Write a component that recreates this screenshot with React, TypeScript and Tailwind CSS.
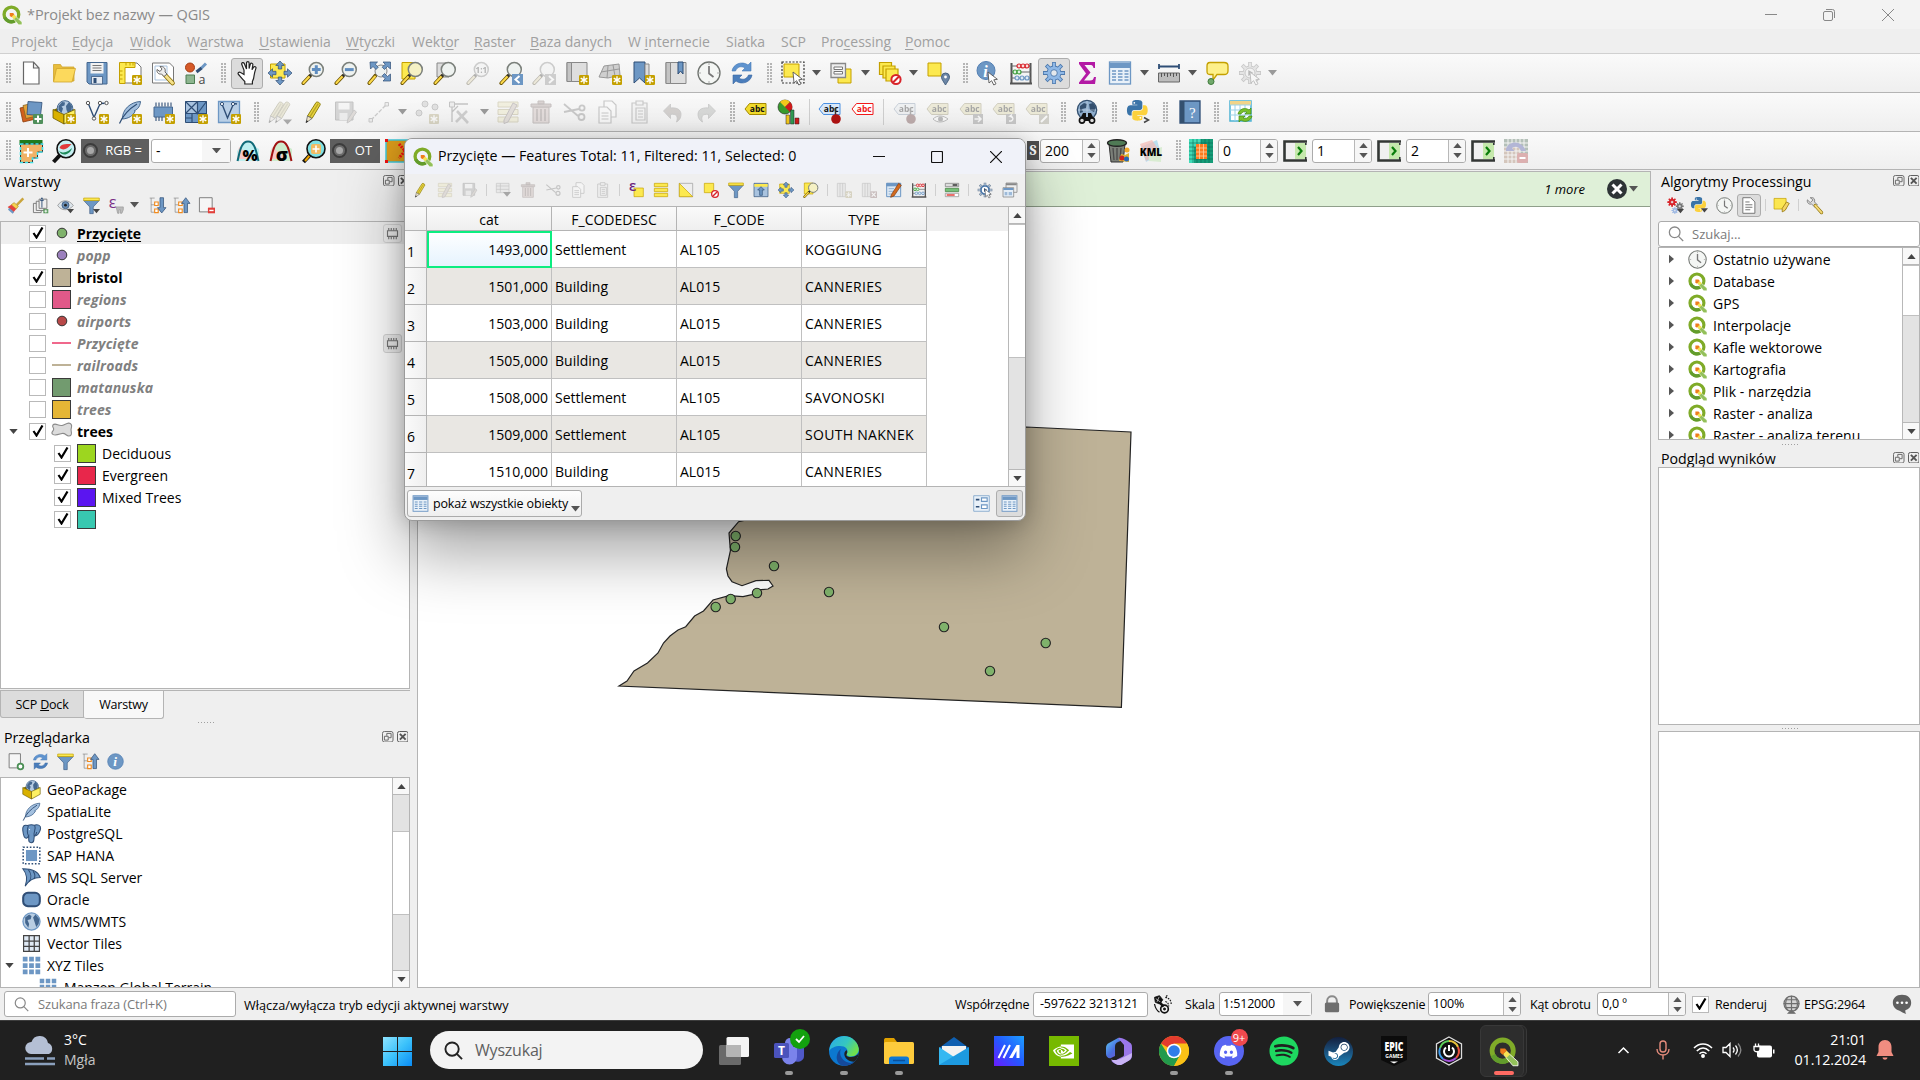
import React from "react";
import { FaDiscord, FaSpotify, FaSteamSymbol } from "react-icons/fa6";
import { SiNvidia } from "react-icons/si";

const B = "#6d97c4";
const D = "#2f4e76";
const Y = "#fce94f";
const G = "#c4a000";

/* ---------- shared icon parts ---------- */

const Star = () => (
  <g>
    <rect x="14" y="14" width="10" height="10" rx="1.2" fill={G} />
    <path d="M19 15.200v7.600M15.700 17.100l6.600 3.800M22.300 17.100l-6.600 3.800" stroke="#fff" strokeWidth="1.400" />
  </g>
);

const Glass = ({ fill = "#eef2f0" }: { fill?: string }) => (
  <g>
    <path d="M9 15L2.200 22.200" stroke="#6a5200" strokeWidth="3.600" strokeLinecap="round" />
    <path d="M8.200 15.800L2.400 22" stroke="#fcd94a" strokeWidth="2" strokeLinecap="round" />
    <path d="M10.600 13.200L8.600 15.400" stroke="#333" strokeWidth="2.600" />
    <circle cx="15.300" cy="8.600" r="7" fill={fill} stroke="#7b807b" strokeWidth="1.500" />
  </g>
);

const Pencil = () => (
  <g>
    <path d="M6.500 16L15 2.500c1.500-1.300 4.500.5 4.200 2.300L11 18.500z" fill="#e8d33f" stroke="#8f8010" />
    <path d="M8.700 17.200L17.200 3.600" stroke="#b8a524" strokeWidth="1.300" />
    <path d="M6.500 16L5 22.800l6-4.300z" fill="#efe3c4" stroke="#666" strokeWidth=".8" />
    <path d="M5.600 20.300L5 22.800l2.200-1.500z" fill="#111" />
  </g>
);

const Globe = () => (
  <g>
    <circle cx="13" cy="8.500" r="7.800" fill="#b5cbe2" stroke="#44678f" />
    <path d="M6.500 6l3.500-4 3 .5-.5 3-3 1 1.500 2-1.500 4.500-3-3zM14 6l3-4 3 4-.5 5-3 3-2-4z" fill="#44678f" />
  </g>
);

const BoxBack = () => <path d="M1 10l11-5 11 5-11 5z" fill="#7d6a00" />;
const Box3 = () => (
  <g>
    <path d="M1 9.500l11 5V24L1 18z" fill="#d9b100" stroke="#6b5a00" strokeWidth=".8" />
    <path d="M23 9.500l-11 5V24l11-6z" fill="#fdf062" stroke="#6b5a00" strokeWidth=".8" />
  </g>
);

const Tag = ({ f = "#f2dc2c", s = "#a58a00", t = "#111" }: { f?: string; s?: string; t?: string }) => (
  <g>
    <path d="M1 9l4.500-5.500H22v11H5.500z" fill={f} stroke={s} />
    <text x="13.200" y="12.200" fontSize="8.500" fontWeight="700" textAnchor="middle" fill={t} fontFamily="Open Sans, sans-serif">
      abc
    </text>
  </g>
);

const Abacus = () => (
  <g fill="none">
    <path d="M2.500 2v20M21.500 2v20M1 22.500h22" stroke="#555" strokeWidth="2" />
    <path d="M2 5h20M2 11h20M2 17h20" stroke="#666" />
    <g stroke="#d8232a" strokeWidth="1.200" fill="#fbdcdc">
      <circle cx="10" cy="5" r="2" />
      <circle cx="18" cy="5" r="2" />
      <circle cx="14" cy="5" r="2" />
    </g>
    <g stroke="#3fa03f" strokeWidth="1.200" fill="#def3de">
      <circle cx="6" cy="11" r="2" />
      <circle cx="10" cy="11" r="2" />
    </g>
    <g stroke={B} strokeWidth="1.200" fill="#dfeaf5">
      <circle cx="8" cy="17" r="2" />
      <circle cx="13" cy="17" r="2" />
      <circle cx="18" cy="17" r="2" />
    </g>
  </g>
);

const PY =
  "M14.25.18l.9.2.73.26.59.3.45.32.34.34.25.34.16.33.1.3.04.26.02.2-.01.13V8.5l-.05.63-.13.55-.21.46-.26.38-.3.31-.33.25-.35.19-.35.14-.33.1-.3.07-.26.04-.21.02H8.77l-.69.05-.59.14-.5.22-.41.27-.33.32-.27.35-.2.36-.15.37-.1.35-.07.32-.04.27-.02.21v3.06H3.17l-.21-.03-.28-.07-.32-.12-.35-.18-.36-.26-.36-.36-.35-.46-.32-.59-.28-.73-.21-.88-.14-1.05-.05-1.23.06-1.22.16-1.04.24-.87.32-.71.36-.57.4-.44.42-.33.42-.24.4-.16.36-.1.32-.05.24-.01h.16l.06.01h8.16v-.83H6.18l-.01-2.75-.02-.37.05-.34.11-.31.17-.28.25-.26.31-.23.38-.2.44-.18.51-.15.58-.12.64-.1.71-.06.77-.04.84-.02 1.27.05z";

const Python = () => (
  <g>
    <path d={PY} fill="#3a74a8" />
    <path d={PY} fill="#fcd13d" transform="rotate(180 12 12)" />
    <circle cx="8.500" cy="3.300" r="1" fill="#fff" />
    <circle cx="15.500" cy="20.700" r="1" fill="#fff" />
  </g>
);

const Cursor = () => <path d="M12 11l1 11 2.600-2.300 2.200 4.300 2.200-1.200-2.200-4 3.600-.5z" fill="#fff" stroke="#555" strokeWidth=".9" />;

const Clock = () => (
  <g>
    <circle cx="12" cy="12" r="11" fill="#f4f6f4" stroke="#6f736f" strokeWidth="1.300" />
    <path d="M12 5v7.500l4.500 3.500" stroke="#777" strokeWidth="1.700" fill="none" />
    <path d="M12 2v2M12 20v2M2 12h2M20 12h2" stroke="#aaa" />
  </g>
);

const Refresh = () => (
  <g>
    <path d="M2 10C3 3 12-.5 18 4l3-3v9h-9l3-3C11 4.500 7 6 5.500 10z" fill="#5e93cf" stroke="#4478b5" strokeWidth=".6" />
    <path d="M22 14c-1 7-10 10.500-16 6l-3 3v-9h9l-3 3c4 2.500 8 1 9.500-3z" fill="#4a7dbb" stroke="#3a68a3" strokeWidth=".6" />
  </g>
);

const Table = () => (
  <g>
    <rect x="1.500" y="1" width="21" height="22" fill="#e9f1f9" stroke={B} strokeWidth="1.300" />
    <path d="M2 2h20v5H2z" fill={B} />
    <path d="M4 10h4M4 13h4M4 16h4M4 19h4M10 10h4.500M10 13h4.500M10 16h4.500M10 19h4.500M16.500 10h4M16.500 13h4M16.500 16h4M16.500 19h4" stroke={B} strokeWidth="1.500" />
  </g>
);

const Funnel = () => (
  <g>
    <path d="M1 5h22l-8.500 9v9.500h-5V14z" fill={B} stroke={D} strokeWidth=".8" />
    <path d="M1 1.500h22V5H1z" fill={Y} stroke={G} />
  </g>
);

const Feather = () => (
  <g>
    <path d="M4.500 19C4 10 12 2 22.500 1.500 22 8 18 10 16 11c1 0 1 .5 1 .5-2 4-6 7-12.500 7.500z" fill="#a3c0df" stroke="#44678f" />
    <path d="M1.500 23.500C5 15 11 9 19 4" stroke={D} fill="none" strokeWidth="1.200" />
  </g>
);

const Arrows4 = () => (
  <g fill={B} stroke={D} strokeWidth=".7">
    <path d="M12 0l4.200 4.500h-2.500V8h-3.400V4.500H7.800zM12 24l4.200-4.500h-2.500V16h-3.400v3.500H7.800zM0 12l4.500-4.200v2.500H8v3.400H4.500v2.500zM24 12l-4.500-4.200v2.500H16v3.400h3.500v2.500z" />
  </g>
);

const Trash = () => (
  <g>
    <path d="M4 7h16v16H4z" fill="#e9a9a0" stroke="#8b5a52" />
    <path d="M2 4h20v3H2zM9 1h6v3H9z" fill="#c98a80" stroke="#8b5a52" />
    <path d="M8 9v12M12 9v12M16 9v12" stroke="#8b5a52" strokeWidth="1.500" />
  </g>
);

const Rows = () => (
  <g fill={Y} stroke={G}>
    <path d="M2 2h20v5H2zM2 9.500h20v5H2zM2 17h20v5H2z" />
  </g>
);

const Tree = () => (
  <g>
    <path d="M1 1.500h7M3 1.500v20h5M3 11h5" stroke="#888" fill="none" />
    <path d="M8 7h5v5H8zM8 17h5v5H8z" fill="#fff" stroke="#f08a1d" strokeWidth="1.600" />
  </g>
);

const Gear = ({ c = B, s = D }: { c?: string; s?: string }) => (
  <g>
    <path d="M12 1v22M1 12h22M4.200 4.200l15.600 15.600M19.800 4.200L4.200 19.800" stroke={s} strokeWidth="3.800" />
    <circle cx="12" cy="12" r="7.400" fill={s} />
    <path d="M12 1.800v20.400M1.800 12h20.400M4.800 4.800l14.400 14.400M19.200 4.800L4.800 19.200" stroke={c} strokeWidth="2.200" />
    <circle cx="12" cy="12" r="6.600" fill={c} />
    <circle cx="12" cy="12" r="3.300" fill="#e4e8ec" stroke={s} strokeWidth=".9" />
  </g>
);

const Q = () => (
  <g>
    <circle cx="11.300" cy="11.300" r="8.800" fill="none" stroke="#7fab28" strokeWidth="4" />
    <path d="M3.300 15A8.800 8.800 0 0015 19.300" fill="none" stroke="#629c2c" strokeWidth="4" />
    <path d="M14.800 12.200L24 20.500v3.300h-4.200l-7.200-8.600z" fill="#93c05a" stroke="#fff" strokeWidth=".7" />
    <path d="M11.500 14l2.800-2.800 3.200 3-3 3z" fill="#f6e354" />
    <path d="M9.300 9.600h4l1.500 1.500-3.600 3.600-1.900-1.900z" fill="#ee7d1b" />
  </g>
);

const Doc = () => <path d="M4 1h11l6 6v16H4z" fill="#fff" stroke="#666" strokeWidth="1.200" />;

const Grid9 = () => (
  <path d="M1 1h6v6H1zM9 1h6v6H9zM17 1h6v6h-6zM1 9h6v6H1zM9 9h6v6H9zM17 9h6v6h-6zM1 17h6v6H1zM9 17h6v6H9zM17 17h6v6h-6z" fill={B} />
);

const Hand = () => (
  <path
    d="M9 13.500V9L6.800 3.600c-.7-2 1.700-2.800 2.500-1L11.500 8V2c0-1.900 2.600-1.900 2.600 0v5.500l1.200-4.300c.6-1.700 2.900-1 2.500.8L17 8.800l1.600-2.600c1-1.400 2.900-.3 2.300 1.200-.8 2.200-1.600 5-1.900 7.600-.2 3-1.200 4.500-1.600 5.500V23H9.800v-2.500C7 18 5.200 15.500 3.500 13.500c-1.200-1.600.6-3 2.100-2z"
    fill="#fff"
    stroke="#222"
    strokeWidth="1.200"
  />
);

/* ---------- icon set ---------- */

const icons: Record<string, React.ReactNode> = {
  q: <Q />,
  new: <path d="M4.500 1h10l5.500 6v16H4.500zM14.500 1v6H20" fill="#fff" stroke="#666" strokeWidth="1.200" />,
  open: (
    <g stroke="#cfa52c" strokeWidth=".8">
      <path d="M1.500 20V3.500h7L10 6h12v14z" fill="#e8bd3d" />
      <path d="M4.500 7.500h19L20 21H1.500z" fill="#fcd95c" />
    </g>
  ),
  save: (
    <g>
      <path d="M2 1.500h20V23H4l-2-2z" fill={B} stroke="#44678f" />
      <path d="M5.500 2h13v10.500h-13z" fill="#f2f2f2" />
      <path d="M7.500 4.500h9M7.500 7h9M7.500 9.500h9" stroke="#777" />
      <path d="M6.500 15.500h11V23h-11z" fill="#e6ebf2" stroke={D} strokeWidth=".7" />
      <path d="M8.500 17h3v5h-3z" fill={D} />
    </g>
  ),
  layoutNew: (
    <g>
      <path d="M6 2h13l4 4v16H6z" fill="#fff" stroke="#777" />
      <path d="M1.500 1.500h15.500v5h-10v16H1.500z" fill={Y} stroke={G} />
      <path d="M8 2v2.500M12 2v2.500M15 2v2.500M2 10h2.500M2 14h2.500M2 18h2.500" stroke={G} />
      <Star />
    </g>
  ),
  layoutMgr: (
    <g>
      <path d="M1.500 2h17l4 4v16h-21z" fill="#fff" stroke="#777" />
      <path d="M4 5h12v14H4z" fill="none" stroke="#a9c3df" />
      <path d="M13.500 13.500l8 8.500" stroke="#8a6d00" strokeWidth="4.600" strokeLinecap="round" />
      <path d="M13.500 13.500l8 8.500" stroke="#f4e08a" strokeWidth="3" strokeLinecap="round" />
      <path d="M9 5.500c4-.5 6 2.500 5 5.500l2 2-3 2.500-2.500-2.500c-3 .5-5-1.500-4.500-4.500l3 2L11 8z" fill="#eee" stroke="#666" />
    </g>
  ),
  style: (
    <g>
      <circle cx="6" cy="6.500" r="4.500" fill="#d65a28" stroke="#a53d14" />
      <path d="M2 14h8.500v8.500H2z" fill="#8db58f" stroke="#4c7d52" />
      <path d="M22 2.500L17 7.500" stroke={B} strokeWidth="3" />
      <path d="M17.500 7L12.500 11" stroke={D} strokeWidth="3" />
      <text x="18" y="22.500" fontSize="12.500" textAnchor="middle" fill="#444" fontFamily="Open Sans, sans-serif">a</text>
    </g>
  ),
  hand: <Hand />,
  panSel: (
    <g>
      <path d="M2.500 3h14.500v14H2.500z" fill={Y} stroke={G} />
      <path d="M8 8h8v8H8z" fill={Y} />
      <Arrows4 />
    </g>
  ),
  zin: (<g><Glass /><path d="M15.300 4.200V13M10.900 8.600h8.800" stroke="#5f8dc0" strokeWidth="3" /></g>),
  zout: (<g><Glass /><path d="M10.900 8.600h8.800" stroke="#5f8dc0" strokeWidth="3" /></g>),
  zfull: (
    <g>
      <path d="M8.500 14.500L2.200 22.200" stroke="#6a5200" strokeWidth="3.600" strokeLinecap="round" />
      <path d="M8 15.500L2.400 22" stroke="#fcd94a" strokeWidth="2" strokeLinecap="round" />
      <circle cx="14" cy="10" r="6" fill="#eef2f0" stroke="#888" />
      <path d="M3 1h7.500L8.300 3.200l3 3-2.300 2.300-3-3L3.500 8zM23.500 1H16l2.200 2.200-3 3 2.300 2.300 3-3 3 2.500zM23.500 20H16l2.200-2.200-3-3 2.300-2.300 3 3 3-2.500z" fill={B} stroke={D} strokeWidth=".7" />
    </g>
  ),
  zsel: (<g><path d="M2 1.500h13V18H2z" fill={Y} stroke={G} /><Glass fill="#f5f1c4" /></g>),
  zlay: (<g><path d="M4 2h12v14H4z" fill="#ddd" stroke="#888" /><Glass /></g>),
  z11: (
    <g>
      <Glass />
      <text x="15.300" y="12" fontSize="8" fontWeight="700" textAnchor="middle" fill="#333" fontFamily="Open Sans, sans-serif">1:1</text>
    </g>
  ),
  zlast: (<g><Glass /><path d="M13 13h11v11H13z" fill={B} /><path d="M20.500 15l-4 3.500 4 3.500" stroke="#fff" strokeWidth="2" fill="none" /></g>),
  znext: (<g><Glass /><path d="M13 13h11v11H13z" fill="#888" /><path d="M17 15l4 3.500-4 3.500" stroke="#fff" strokeWidth="2" fill="none" /></g>),
  mapNew: (<g><path d="M2 1.500h20v19H2z" fill="#dedede" stroke="#888" /><path d="M2 1.500h4.500v19H2z" fill="#c4c4c4" stroke="#888" /><Star /></g>),
  map3d: (<g><path d="M1 16L6 5l15-2 1 11-12 3z" fill="#cfcfcf" stroke="#999" /><path d="M3 11l18-3M10 5l-1 12M15 4l2 11" stroke="#999" /><Star /></g>),
  bmNew: (<g><path d="M3 1h11v21l-5.500-5L3 22z" fill={B} stroke={D} /><path d="M14 3h4v12h-4z" fill="#ddd" stroke="#888" /><Star /></g>),
  bms: (<g><path d="M2 1.500h20v21H2z" fill="#dedede" stroke="#888" /><path d="M2 1.500h4.500v21H2z" fill="#c4c4c4" stroke="#888" /><path d="M14 1h5v12l-2.500-3-2.500 3z" fill={B} stroke={D} /></g>),
  clock: <Clock />,
  refresh: <Refresh />,
  select: (<g><path d="M3 3h15v13H3z" fill={Y} stroke={G} /><path d="M1 1h22v21H1z" fill="none" stroke="#333" strokeWidth="1.200" strokeDasharray="2 1.500" /><Cursor /></g>),
  selForm: (<g><path d="M9 8h13v14H9z" fill={Y} stroke={G} /><path d="M2 2.500h14.500v14H2z" fill="#eee" stroke="#888" strokeWidth="1.300" /><path d="M5 6h8.500v2.500H5zM5 10.500h8.500v2.500H5z" fill="#fff" stroke="#777" /></g>),
  desel: (<g fill={Y} stroke={G} strokeWidth="1.200"><path d="M1.500 1.500h12v12h-12z" /><path d="M5 5h12v12H5z" /><path d="M8 8h12v12H8z" /><circle cx="18" cy="18.500" r="4.600" fill="#fff" stroke="#d8232a" strokeWidth="2" /><path d="M15 21.500l6-6" stroke="#d8232a" strokeWidth="2" /></g>),
  selLoc: (<g><path d="M2 2h13v13H2z" fill={Y} stroke={G} /><path d="M19.500 24c-3-5-4-6-4-8a4 4 0 018 0c0 2-1 3-4 8z" fill="#6c86a6" stroke="#44607f" /><circle cx="19.500" cy="16" r="1.400" fill="#fff" /></g>),
  ident: (<g><circle cx="10" cy="9.500" r="9" fill={B} stroke="#517eb3" /><text x="9.500" y="15.500" fontSize="16" fontWeight="700" fontStyle="italic" textAnchor="middle" fill="#fff" fontFamily="Liberation Serif, serif">i</text><Cursor /></g>),
  abacus: <Abacus />,
  gear: <Gear c="#8fb8e6" s="#4d79ad" />,
  sigma: <path d="M4 1h16v6h-1.500c-.5-2.500-1.500-3-4-3H9.500l6 7.500L9 19.500h6c2.500 0 3.500-1 4-3.500H21l-1 7H4v-1.500L11 12.500 4 3z" fill="#b31aa5" />,
  table: <Table />,
  ruler: (<g><path d="M2 5.500h20M2 3v5M22 3v5" stroke={D} strokeWidth="1.800" /><path d="M1.500 12h21v9h-21z" fill="#bdbdbd" stroke="#666" /><path d="M4.500 12v4M7.500 12v3M10.500 12v4M13.500 12v3M16.500 12v4M19.500 12v3" stroke="#555" /></g>),
  bubble: (<g><path d="M5 1.500h14c3 0 4 1 4 3.500v5c0 2.500-1 3.500-4 3.500h-7L8 19v-5.500H5C2.500 13.500 2 12.500 2 10V5c0-2.500.5-3.500 3-3.500z" fill="#fdf08a" stroke={G} strokeWidth="1.300" /><circle cx="6" cy="20.500" r="3" fill="#71a96c" stroke="#3e7a3a" /></g>),
  playGear: (<g><Gear c="#c8c8c8" s="#777" /><circle cx="12" cy="12" r="5" fill="#eee" stroke="#777" /><path d="M10.300 9l5 3-5 3z" fill="#444" /><Cursor /></g>),
  dsm: (<g><path d="M1 8l13-3 3 14-13 3z" fill="#d2601c" stroke="#8a3c0d" strokeWidth=".8" /><path d="M4 5.500l13-3 3 13-13 3z" fill="#e3a33a" stroke="#8a6420" strokeWidth=".8" /><path d="M9 1.500l14 1-1.500 13-13.500-1z" fill={B} stroke={D} strokeWidth=".8" /><rect x="14" y="14" width="10" height="10" rx="1" fill="#4f8f5b" /><path d="M19 15.500v7M15.500 19h7" stroke="#fff" strokeWidth="2" /></g>),
  gpkg: (<g><BoxBack /><Globe /><Box3 /><Star /></g>),
  gpkgs: (<g><BoxBack /><Globe /><Box3 /></g>),
  shpNew: (<g><path d="M3.500 4l5.500 13.500L14 6c1-3 3-3 5.500-2.500" fill="none" stroke={D} strokeWidth="1.400" /><g fill="#fff" stroke="#444" strokeWidth=".9"><circle cx="3" cy="3" r="1.700" /><circle cx="15" cy="3" r="1.700" /><circle cx="21.500" cy="3" r="1.700" /><circle cx="9" cy="18.500" r="1.700" /></g><Star /></g>),
  spatNew: (<g><Feather /><Star /></g>),
  feather: <Feather />,
  memNew: (<g><path d="M3 7h18.500v10H3z" fill={B} stroke="#44678f" /><path d="M5 2.500v4M8 2.500v4M11 2.500v4M14 2.500v4M17 2.500v4M20 2.500v4M5 17v4M8 17v4M11 17v4" stroke={D} strokeWidth="1.100" /><Star /></g>),
  meshNew: (<g><path d="M1.500 1.500h21v21h-21z" fill={B} stroke={D} /><path d="M2 2h11v11H2z" fill="#a9c3df" /><path d="M1.500 1.500l12 12M13.500 1.500l-12 12M1.500 13.500h21M13.500 1.500v12l9-12M8 13.500v9M1.500 18H8" stroke={D} fill="none" strokeWidth="1.200" /><Star /></g>),
  virtNew: (<g><path d="M1.500 1.500h21v21h-21z" fill="#b9cfe6" stroke={B} strokeWidth="1.300" /><path d="M5 4l5.500 14L16 5c1-1.500 2-1.500 4-1" stroke={D} fill="none" strokeWidth="1.400" /><g fill="#fff" stroke={D}><circle cx="5" cy="4" r="1.600" /><circle cx="16" cy="4" r="1.600" /></g><Star /></g>),
  edits: (<g><g transform="translate(-4 0)"><Pencil /></g><g transform="translate(2.500 0)"><Pencil /></g><path d="M15 19.500h9l-4.500 5z" fill="#222" /></g>),
  pencil: <Pencil />,
  saveEdit: (<g><path d="M1.500 2H19v18H1.500z" fill="#999" stroke="#666" /><path d="M4.500 3h11v6.500h-11z" fill="#f2f2f2" /><path d="M5.500 13h8v7h-8z" fill="#ddd" /><path d="M14 19l6-9 2.500 2L16.500 21l-3.500 2z" fill="#c9a98f" stroke="#777" /></g>),
  line: (<g><path d="M4 20L20 4" stroke="#777" strokeWidth="1.300" strokeDasharray="4 1.500" /><path d="M2 18.500h3.500V22H2zM18 2.500h3.500V6H18z" fill="#ddd" stroke="#777" /></g>),
  addPts: (<g fill="#bbb" stroke="#777"><circle cx="10" cy="4" r="3" /><circle cx="20" cy="7" r="3" /><circle cx="4" cy="13" r="3" /><g stroke="none"><Star /></g></g>),
  vertex: (<g fill="none" stroke="#666"><path d="M4 22V4h16M4 12l6-6" strokeWidth="1.300" /><path d="M1.500 2h5v5h-5z" fill="#ddd" /><path d="M9 11l11 12M19 11L8 22" strokeWidth="2.600" stroke="#888" /></g>),
  editRows: (<g><Rows /><path d="M8 20l9-17 4 2-9 17-4 1.500z" fill="#d9b08c" stroke="#866" /></g>),
  trash: <Trash />,
  cut: (<g fill="none" stroke="#777" strokeWidth="1.800"><path d="M2 4l14 12M2 12l15-3" /><circle cx="19.500" cy="17" r="3" /><circle cx="20" cy="8" r="2.600" /></g>),
  copy: (<g fill="#fff" stroke="#777" strokeWidth="1.200"><path d="M9 1h8l4 4v12H9z" /><path d="M4 7h8l4 4v12H4z" /><path d="M6.500 13h7M6.500 16h7M6.500 19h7" /></g>),
  paste: (<g fill="#eee" stroke="#777" strokeWidth="1.200"><path d="M4 3h15v20H4z" /><path d="M8 1h7v4H8z" /><path d="M8 8h9v12H8zM10 11h5M10 14h5M10 17h5" /></g>),
  undo: <path d="M9.500 4v4c8-1 12 3 10 9.500-1 2.500-3 4-4 4.500 2-5.500 0-8.500-6-7.500v4L2.500 11z" fill="#a58a78" stroke="#777" strokeWidth=".8" />,
  redo: <path d="M14.500 4v4c-8-1-12 3-10 9.500 1 2.500 3 4 4 4.500-2-5.500 0-8.500 6-7.500v4l7-7.500z" fill="#9aa69a" stroke="#777" strokeWidth=".8" />,
  tag: <Tag />,
  tagRed: <Tag f="#fff" s="#f21a1a" t="#f21a1a" />,
  diag: (<g><circle cx="8" cy="7" r="7" fill="#3a9d2e" stroke="#222" strokeWidth=".6" /><path d="M8 7L3 2c3-3 7-3 10 0z" fill="#f4c81c" /><path d="M8 7l5-5c3 3 3 7 0 10z" fill="#cf1b1b" /><path d="M9 15h3.500v9H9z" fill="#f4c81c" stroke="#222" strokeWidth=".5" /><path d="M13.500 10H17v14h-3.500z" fill="#2f9a52" stroke="#222" strokeWidth=".5" /><path d="M18 18h4v6h-4z" fill="#cf1b1b" stroke="#222" strokeWidth=".5" /></g>),
  tagPin: (<g><Tag f="#d9e9fb" s="#4a90e2" /><path d="M17.500 8v8" stroke="#333" strokeWidth="1.500" /><circle cx="18" cy="19" r="4.800" fill="#b01313" /></g>),
  tagEye: (<g><Tag /><path d="M7 19c4-4 10-4 15 0-5 4-11 4-15 0z" fill="#fff" stroke="#555" /><circle cx="14.500" cy="19" r="2.500" fill="#555" /></g>),
  tagMove: (<g><Tag /><path d="M14 14h10v10H14z" fill="#777" /><path d="M15.500 19h6M19 16l3 3-3 3" stroke="#fff" strokeWidth="1.500" fill="none" /></g>),
  tagRot: (<g><Tag /><path d="M14 14h10v10H14z" fill="#777" /><path d="M17 21c5 1 5-5 1-5l2-1.500M18 16l2 1.500" stroke="#fff" strokeWidth="1.300" fill="none" /></g>),
  tagEdit: (<g><Tag /><path d="M14 14h10v10H14z" fill="#9a8f55" /><path d="M16 22l6-6" stroke="#fff" strokeWidth="2" /></g>),
  binoc: (<g><circle cx="12" cy="10" r="9.700" fill="#8eadcc" stroke="#34506f" strokeWidth="1.300" /><path d="M5 6l4-3 3 1-1 4-4 1 1 3-3 1zM14 4l4-1 3 4-2 5-4-2z" fill="#34506f" /><path d="M12 1v18M3 10h18" stroke="#c9d8e8" strokeWidth=".6" /><path d="M4 21l4-8h3v4h2v-4h3l4 8" fill="#111" /><circle cx="7" cy="20.500" r="2.600" fill="#ddd" stroke="#111" strokeWidth="1.600" /><circle cx="17" cy="20.500" r="2.600" fill="#ddd" stroke="#111" strokeWidth="1.600" /></g>),
  pyCon: (<g><g transform="scale(.86)"><Python /></g><path d="M17 17.500l4.500 2.500-4.500 2.500" stroke="#444" strokeWidth="1.500" fill="none" /></g>),
  help: (<g><path d="M2 1h20v22H2z" fill={B} stroke={D} strokeWidth="1.300" /><path d="M2 1h4.500v22H2z" fill="#34506f" /><text x="14.300" y="17.500" fontSize="15" textAnchor="middle" fill="#fff" fontFamily="Liberation Serif, serif">?</text></g>),
  tblRef: (<g><path d="M1 1h21v20H1z" fill="#fff" stroke="#4db3d3" strokeWidth="1.500" /><path d="M1 1h21v4H1z" fill="#f1d489" /><path d="M1 5h21M1 10h21M1 15h21M6 5v16M11 5v16M16 5v16" stroke="#9cd2e6" /><path d="M9 14c1-5 7-7 11-4l2-2v6h-6l2-2c-3-1-5 0-6 2zM23 16c-1 5-7 7-11 4l-2 2v-6h6l-2 2c3 1 5 0 6-2z" fill="#79c02b" stroke="#3f8a12" strokeWidth=".7" /></g>),
  scp1: (<g><path d="M.5 1h23v5H.5z" fill="#1e7b1e" /><path d="M1.500 5h22v8h-5v6h-5v4.500h-12z" fill="#f0b266" stroke="#333" strokeWidth="1" /><path d="M1.500 5h22v8h-5v6h-5v4.500h-12z" stroke="#3fe0e8" strokeWidth="1.600" strokeDasharray="3 2" /><path d="M9 9v9M4.500 13.500h9" stroke="#fff" strokeWidth="2" /></g>),
  scp2: (<g><path d="M8.500 15.500L1.500 23" stroke="#111" strokeWidth="4" /><circle cx="14" cy="9.800" r="9" fill="#c7f0f3" stroke="#111" strokeWidth="1.600" /><path d="M7 12c5 3.500 10 0 13-3-2 7-10 9-13 3z" fill="#1e8b5a" /><path d="M7.500 9c4 3 8 1 12-4-7 0-11 0-12 4z" fill="#e23b3b" /></g>),
  scp3: (<g><path d="M8.500 15.500L1.500 23" stroke="#111" strokeWidth="4" /><path d="M8 16l-5 6" stroke="#e9a100" strokeWidth="2" /><circle cx="14" cy="9.800" r="9" fill="#7fe0e3" stroke="#111" strokeWidth="1.600" /><rect x="9" y="5" width="10" height="10" rx="2" fill="#f2bb63" /><path d="M14 6.500v7M10.500 10h7" stroke="#fff" strokeWidth="1.600" /></g>),
  pct: (<g><path d="M1 12L10 2l13 8v12H1z" fill="#bdeff0" /><path d="M3 8l15 12H1z" fill="#f7c9c9" /><path d="M1.500 22c2-7 3-19.500 10.500-19.500S20.500 15 22.500 22" stroke="#0e6a78" strokeWidth="2" fill="none" /><text x="14" y="22" fontSize="16" fontWeight="800" textAnchor="middle" fill="#000" fontFamily="Open Sans, sans-serif">%</text></g>),
  sig: (<g><path d="M1 12L10 2l13 8v12H1z" fill="#cdeccd" /><path d="M3 8l15 12H1z" fill="#f7c9c9" /><path d="M1.500 22c2-7 3-19.500 10.500-19.500S20.500 15 22.500 22" stroke="#a01111" strokeWidth="2" fill="none" /><text x="13" y="22" fontSize="18" fontWeight="800" textAnchor="middle" fill="#000" fontFamily="Open Sans, sans-serif">σ</text></g>),
  orange: (<g><path d="M1 1h23v22H1z" fill="#d99a1b" stroke="#3fc6d8" strokeWidth="1.500" /><path d="M14 5l6 7-6 7" stroke="#e11" strokeWidth="3" strokeDasharray="2 1" fill="none" /><path d="M0 0h3v3H0zM0 21h3v3H0z" fill="#e11" /></g>),
  bin: (<g><path d="M3 5h16l-2 18H5z" fill="#7b7f78" stroke="#333" /><ellipse cx="11" cy="4" rx="9.500" ry="3.300" fill="#4f7a55" stroke="#222" strokeWidth="1.400" /><path d="M7 9l1 12M11 9v12M15 9l-1 12" stroke="#4a4a4a" strokeWidth="1.300" /><path d="M13 22l2-7 4 1 4-2v9z" fill="#e0b431" /><circle cx="16" cy="19" r="2.500" fill="#c22" /><circle cx="20.500" cy="20" r="2.500" fill="#2766b8" /><circle cx="21" cy="11" r="2.500" fill="#f0a92b" /></g>),
  kml: (<g><path d="M2 8L18 1l4 14-15 8z" fill="#bcdff0" /><path d="M1 5l12-4 8 12-14 9z" fill="#f3b9b4" opacity=".7" /><path d="M9 12l14-4-1 15-12-1z" fill="#d9ecd2" /><text x="12" y="16.500" fontSize="10" fontWeight="800" textAnchor="middle" fill="#000" fontFamily="Open Sans, sans-serif">KML</text></g>),
  grid: (<g><path d="M0 0h24v24H0z" fill="#169c78" /><path d="M0 0h12v8H5v16H0z" fill="#3fdcb8" /><path d="M4 0v24M8 0v24M12 0v24M16 0v24M20 0v24M0 4h24M0 8h24M0 12h24M0 16h24M0 20h24" stroke="#0c6a55" strokeWidth=".6" /><path d="M7 5h11v15H7z" fill="#ff7a1f" /><path d="M10.500 5v15M14.500 5v15M7 9h11M7 13h11M7 17h11" stroke="#ffd0a0" strokeWidth=".8" /></g>),
  play: (<g><path d="M.5 1h23v22H.5z" fill="#f0f0f0" /><path d="M12 4h11v16H12z" fill="#c5e8ac" /><path d="M24 2.500H1.500v19H24" fill="none" stroke="#333735" strokeWidth="2.600" /><path d="M22.800 4v2M22.800 18v3" stroke="#333735" strokeWidth="1.600" /><path d="M15 8l3.500 4-3.500 4" fill="none" stroke="#0a7d0a" strokeWidth="2.200" /></g>),
  gridUndo: (<g><path d="M0 0h24v24H0z" fill="#b4c0b8" /><path d="M0 8h16v16H0z" fill="#d4c6bc" /><path d="M4 0v24M8 0v24M12 0v24M16 0v24M20 0v24M0 4h24M0 8h24M0 12h24M0 16h24M0 20h24" stroke="#f4f4f4" strokeWidth="1" /><path d="M2 10C5 1 18 1 22 12h-5c-2-5-6-5-9-3l2.500 3H2z" fill="#b3b6d6" /><rect x="13" y="14" width="11" height="10" rx="2" fill="#dcb0b0" /><path d="M15.500 19h6" stroke="#fff" strokeWidth="2" /></g>),
  brush: (<g><path d="M23 2l-9 9" stroke="#caa53d" strokeWidth="3.500" /><path d="M10 8l6 5-3 4-7-6z" fill="#f7d24f" stroke="#b38f1c" /><path d="M6 11l7 6-4 5-8-8z" fill="#e4433e" /><path d="M3 15l7 6-2 2.500L1.500 18z" fill={B} /></g>),
  group: (<g fill="#eee" stroke="#777" strokeWidth="1.300"><path d="M2 9h11v13H2z" /><path d="M6 6h11v13H6z" /><path d="M10 3h11v13H10z" /><path d="M14 5v10M12 5l2-4 2 4z" stroke={D} /><path d="M16 17h7v6h-7z" fill="#5c9b60" stroke="none" /><path d="M19.500 18v4M17.500 20h4" stroke="#fff" /></g>),
  eye: (<g><path d="M1 12C6 3 17 3 23 12 17 20 6 20 1 12z" fill="#dce4ea" stroke="#888" /><circle cx="12" cy="11.500" r="5" fill="#6b8fb5" stroke={D} /><circle cx="12" cy="11.500" r="2" fill="#222" /><path d="M14 17h10l-5 6z" fill="#444" /></g>),
  filterA: (<g><Funnel /><path d="M14 17h10l-5 6z" fill="#444" /></g>),
  filter: <Funnel />,
  eps: (<g><text x="8" y="15" fontSize="23" textAnchor="middle" fill="#7a2f86" fontFamily="Open Sans, sans-serif">ε</text><path d="M13 14h10v4l-2 5h-2v-5h-2v5h-2z" fill="#bbb" stroke="#999" /></g>),
  expand: (<g><Tree /><path d="M15.500 1h5v14h3.500L18 22.500 12 15h3.500z" fill={B} stroke={D} /></g>),
  collapse: (<g><Tree /><path d="M15.500 22h5V9H24L18 1 12 9h3.500z" fill={B} stroke={D} /></g>),
  remove: (<g><path d="M2 1h18v20H2z" fill="#f6f6f6" stroke="#777" strokeWidth="1.300" /><path d="M14 15h10v8H14z" fill="#e2403b" /><path d="M16 19h6" stroke="#fff" strokeWidth="2" /></g>),
  addItem: (<g><path d="M3 1h16v20H3z" fill="#f6f6f6" stroke="#777" strokeWidth="1.300" /><circle cx="19" cy="19" r="4" fill="#fff" stroke="#4b8f55" strokeWidth="2.500" /></g>),
  info: (<g><circle cx="12" cy="12" r="11" fill={B} stroke="#517eb3" /><text x="11.500" y="18.500" fontSize="19" fontWeight="700" fontStyle="italic" textAnchor="middle" fill="#fff" fontFamily="Liberation Serif, serif">i</text></g>),
  pg: (
    <g fill={B} stroke={D} strokeWidth="1.300">
      <path d="M7 2C2 0 .5 4 1 8c.5 5 2 10 4.500 10 1.500 0 2-1.500 3-3v5c0 4.500 6 5 6.500 0l.5-5c4 1 7.500-5 8-9.500.3-4-4-5.500-8-4-3-1-6-.7-8.500.500z" />
      <path d="M8.500 15C6 13 6.500 6 8 2.500M15.500 15c-2-4 3-8 .5-13.500M15.500 15c2-1 3-3 3-5" fill="none" />
      <circle cx="9.500" cy="7" r=".8" fill="#fff" stroke="none" />
    </g>
  ),
  hana: (<g><path d="M5 5h14v14H5z" fill={B} /><path d="M1.500 1.500h21v21h-21z" fill="none" stroke={D} strokeWidth="2" strokeDasharray="2 2.200" /></g>),
  mssql: (<g><path d="M1 1c8 0 19 2 22 11-6 0-14 3-19 11 3-8 2-16-3-22z" fill={B} stroke={D} strokeWidth="1.300" /><path d="M8 2c4 5 4 11 1 15M14 4c3 4 3 7 1 10" stroke={D} fill="none" strokeWidth="1.300" /></g>),
  oracle: <rect x="1.500" y="3.500" width="21" height="17" rx="6" fill={B} stroke={D} strokeWidth="2.600" />,
  globe: (<g><circle cx="12" cy="12" r="10.800" fill="#b9cee3" stroke={B} strokeWidth="1.600" /><path d="M4 7l5-4 3 2-1 4-4 1 2 5-1 5-4-6zM14 7l3-4 5 6-1 6-3 4-2-6z" fill="#44678f" /></g>),
  vtile: (<g><path d="M2 2h20v20H2z" fill="#dfe9f4" stroke="#444" strokeWidth="1.500" /><path d="M9 2v20M15.500 2v20M2 9h20M2 15.500h20" stroke="#444" strokeWidth="1.600" /></g>),
  grid9: <Grid9 />,
  selExp: (<g><path d="M9 9h14v13H9z" fill={Y} stroke={G} /><text x="7" y="14" fontSize="21" fontWeight="600" textAnchor="middle" fill="#6b1f7d" fontFamily="Open Sans, sans-serif">ε</text></g>),
  rows: <Rows />,
  invert: (<g><path d="M2 2h20v20H2z" fill="#eee" stroke="#999" /><path d="M2 2l20 20H2z" fill={Y} stroke={G} /></g>),
  deselS: (<g><path d="M2 2h14v14H2z" fill={Y} stroke={G} /><circle cx="18" cy="18" r="5" fill="#fff" stroke="#d8232a" strokeWidth="2" /><path d="M15 21l6-6" stroke="#d8232a" strokeWidth="2" /></g>),
  top: (<g><path d="M1.500 2h21v20h-21z" fill="#a9c3df" stroke={D} /><path d="M2 3h20v4H2z" fill={Y} /><path d="M12 7l5 5h-3v8h-4v-8H7z" fill={B} stroke={D} /></g>),
  rowAdd: (<g><path d="M2 2h19v14H2z" fill="#ddd" stroke="#777" /><path d="M2 6h19M2 11h19M8 2v14" stroke="#777" /><path d="M12 15h12l-6 7z" fill="#222" /></g>),
  colAdd: (<g><path d="M2 2h12v20H2z" fill="#ddd" stroke="#777" /><path d="M6 2v20M10 2v20" stroke="#777" /><Star /></g>),
  colDel: (<g><path d="M2 2h12v20H2z" fill="#ddd" stroke="#777" /><path d="M6 2v20M10 2v20" stroke="#777" /><path d="M14 14h10v10H14z" fill="#b55" /><path d="M16 16l6 6M22 16l-6 6" stroke="#fff" strokeWidth="1.800" /></g>),
  calcPen: (<g><path d="M1 2h21v20H1z" fill="#dce8f4" stroke={B} strokeWidth="1.500" /><path d="M1 2h21v4H1zM4 10h8M4 14h8M4 18h8" stroke={B} fill={B} /><path d="M8 19L19 2l4 3-11 16-5 2z" fill="#d2691e" stroke="#7a3a10" /></g>),
  condFmt: (<g><path d="M2 2h20v5H2z" fill="#ddd" stroke="#777" /><path d="M2 9.500h20v5H2z" fill="#76c07a" stroke="#3e7a3a" /><path d="M2 17h20v5H2z" fill="#fff" stroke="#888" /><path d="M4 19.500h12" stroke="#e2403b" strokeWidth="2" /><path d="M13 4.500h7" stroke="#333" strokeWidth="2" /></g>),
  action: (<g><Gear c="#b4c4d6" s="#6b7f96" /><circle cx="12" cy="12" r="6" fill="#fff" stroke="#4b78ab" strokeWidth="2.500" /><path d="M10.500 9l5 3-5 3z" fill={D} /><Cursor /></g>),
  dock: (<g><path d="M6 1.500h16.500v14H6z" fill="#eee" stroke="#777" /><path d="M6 2h16v3H6z" fill="#888" /><path d="M1.500 8.500h16v14h-16z" fill="#e5eef7" stroke="#777" /><path d="M2 9h15v3H2z" fill={B} /><path d="M4 15h4v5H4zM10 15h5v5h-5z" fill={B} opacity=".6" /></g>),
  form: (<g><path d="M1 1h22v22H1z" fill="#e9f1f9" stroke={B} /><path d="M12 4h8v5h-8zM12 14h8v5h-8z" fill="#fff" stroke={B} strokeWidth="1.600" /><path d="M4 6.500h5M4 16.500h5" stroke={D} strokeWidth="2.200" /></g>),
  gears: (<g><g transform="scale(.6)"><Gear c="#d8232a" s="#d8232a" /></g><g transform="translate(12 7) scale(.5)"><Gear c="#777" s="#777" /></g><g transform="translate(6 14) scale(.42)"><Gear c="#9db8e3" s="#9db8e3" /></g><path d="M14 17h10l-5 6z" fill="#444" /></g>),
  pyA: (<g><g transform="scale(.88)"><Python /></g><path d="M14 16h10l-5 6z" fill="#444" /></g>),
  docL: (<g><Doc /><path d="M7.500 7h6M7.500 11h10M7.500 14.500h10M7.500 18h7" stroke="#777" strokeWidth="1.400" /></g>),
  note: (<g><path d="M1.500 2h17v15h-17z" fill="#fbe650" stroke={G} /><path d="M13 16l6-9 4 2-6 10-4 2z" fill="#f5d565" stroke="#8a6d00" /></g>),
  wrench: (<g><path d="M2 4l4 4 4-4-4-3c5-1 7 2 6 6l4 4-4 3-4-4C4 11 1 8 2 4z" fill="#ddd" stroke="#777" strokeWidth="1.200" /><path d="M13 12l9 10" stroke="#8a6d00" strokeWidth="4.500" strokeLinecap="round" /><path d="M13 12l9 10" stroke="#f3d978" strokeWidth="2.800" strokeLinecap="round" /></g>),
  poly: <path d="M1 5c3-4 7 2 12 0s8-4 10-1-1 4 0 8 0 6-3 6-4-4-8-3-8 3-11 1 1-4 1-6-2-3-1-5z" fill="#dcdcdc" stroke="#8a8a8a" strokeWidth="1.300" />,
  chip: (<g><path d="M4 7.500h16v9H4z" fill="#eee" stroke="#777" strokeWidth="1.800" /><path d="M6 3v4M10 3v4M14 3v4M18 3v4M6 17v4M10 17v4M14 17v4M18 17v4" stroke="#777" strokeWidth="1.800" /></g>),
  lens: (<g fill="none" stroke="#888" strokeWidth="1.900"><circle cx="10" cy="9.500" r="8" /><path d="M15.800 15.500l7 7" /></g>),
  sat: (<g fill="none" stroke="#111"><path d="M3 4l6-2 4 5-4 5-5-2z" fill="#111" /><path d="M4 5l7 6M8 3l-3 7M3 12c1 5 3 8 6 10" strokeWidth="1.500" stroke="#111" /><path d="M4.500 5.500l6 4.500M8.500 3.500l-2.500 6" stroke="#eee" strokeWidth=".8" /><path d="M9 10l5 5" strokeWidth="3" /><circle cx="15" cy="18" r="4.600" strokeWidth="2" /><circle cx="15" cy="18" r="1.300" fill="#111" /><path d="M16 9c3 1 4 3 4 6M16 4c5 1 7 4 7 8M17 3l2-2" strokeWidth="1.400" strokeDasharray="2 1.200" /></g>),
  lock: (<g><path d="M5.500 11V8c0-8.500 13-8.500 13 0v3" fill="none" stroke="#8a8a8a" strokeWidth="2.600" /><rect x="2.500" y="10" width="19" height="13" rx="2" fill="#6e6e6e" /></g>),
  wire: (<g fill="none" stroke="#6e6e6e" strokeWidth="1.500"><circle cx="12" cy="11" r="9.500" fill="#d5d5d5" /><path d="M12 1v20M2 11h20M4 6h16M4 16h16M7 2.500c-3 5-3 12 0 17M17 2.500c3 5 3 12 0 17" /><path d="M8 23h8l-4-4z" fill="#6e6e6e" /></g>),
  msg: (<g><path d="M12 1C5 1 1 5 1 10.500S5 19 9 20c2 1 5 3 8 4-1-2-1-3-1-4.500 4-1 7-4 7-9C23 5 19 1 12 1z" fill="#5f5f5f" /><circle cx="6.500" cy="10.500" r="1.600" fill="#fff" /><circle cx="12" cy="10.500" r="1.600" fill="#fff" /><circle cx="17.500" cy="10.500" r="1.600" fill="#fff" /></g>),
};

type IcProps = { n: string; c?: string; off?: boolean };
const Ic = ({ n, c = "size-6", off }: IcProps) => (
  <svg viewBox="0 0 24 24" fill="none" className={`${c} shrink-0 overflow-visible ${off ? "opacity-35 grayscale-[.7]" : ""}`}>
    {icons[n]}
  </svg>
);

/* ---------- toolbar pieces ---------- */

const Slot = ({ n, off, on }: { n: string; off?: boolean; on?: boolean }) => (
  <div className="flex w-[33px] shrink-0 items-center justify-center">
    {on ? (
      <div className="flex h-[31px] w-8 items-center justify-center rounded-[3px] border border-[#adadad] bg-[#dcdcdc]">
        <Ic n={n} />
      </div>
    ) : (
      <Ic n={n} off={off} />
    )}
  </div>
);

const Arr = ({ c = "w-[15.5px]", off }: { c?: string; off?: boolean }) => (
  <div className={`flex shrink-0 items-center justify-center ${c}`}>
    <svg viewBox="0 0 10 6" className="h-[5.5px] w-[9px]">
      <path d="M0 0h10L5 6z" fill={off ? "#9a9a9a" : "#555"} />
    </svg>
  </div>
);

const Grip = ({ c = "w-[17px] pl-[8px]" }: { c?: string }) => (
  <div className={`flex shrink-0 items-center ${c}`}>
    <div className="h-[21px] w-[5px] bg-[radial-gradient(circle_at_1px_1px,#b5b5b5_0.8px,transparent_1px)] bg-[length:3px_3px]" />
  </div>
);

const Sep = ({ c = "w-2 h-6" }: { c?: string }) => (
  <div className={`flex shrink-0 justify-center ${c}`}>
    <div className="w-px bg-[#cfcfcf]" />
  </div>
);

const Spin = ({ v, c = "w-[60px] h-6" }: { v: string; c?: string }) => (
  <div className={`flex shrink-0 overflow-hidden rounded-[3px] border border-[#ababab] bg-white ${c}`}>
    <span className="flex flex-1 items-center pl-1">{v}</span>
    <div className="flex w-[17px] flex-col items-center justify-center gap-[5px] border-l border-[#b8b8b8] bg-[#f6f6f6]">
      <svg viewBox="0 0 10 6" className="h-[5px] w-[9px]"><path d="M0 6h10L5 0z" fill="#555" /></svg>
      <svg viewBox="0 0 10 6" className="h-[5px] w-[9px]"><path d="M0 0h10L5 6z" fill="#555" /></svg>
    </div>
  </div>
);

const bar = "flex shrink-0 items-center border-b border-[#b4b4b4] bg-linear-to-b from-[#fafafa] to-[#efefef]";

const Slots = ({ list, off }: { list: string; off?: boolean }) => (
  <>
    {list.split(" ").map((n) => (
      <Slot key={n} n={n} off={off} />
    ))}
  </>
);

const menus: [string, string, string][] = [
  ["Pro", "j", "ekt"], ["", "E", "dycja"], ["", "W", "idok"], ["W", "a", "rstwa"], ["", "U", "stawienia"], ["", "W", "tyczki"],
  ["Wekt", "o", "r"], ["", "R", "aster"], ["", "B", "aza danych"], ["W ", "i", "nternecie"], ["Siatka", "", ""], ["SCP", "", ""],
  ["Pro", "c", "essing"], ["", "P", "omoc"],
];
const menuW = [
  "w-[61px]", "w-[58px]", "w-[57px]", "w-[72px]", "w-[87px]", "w-[66px]", "w-[62px]", "w-[56px]", "w-[98px]", "w-[98px]", "w-[55px]", "w-[40px]", "w-[84px]", "w-[60px]",
];

const DarkTag = ({ t, c }: { t: string; c: string }) => (
  <div className={`flex h-6 shrink-0 items-center bg-[#5e5e5e] text-[13px] text-white ${c}`}>
    <span className="ml-[2px] flex size-[15px] items-center justify-center rounded-full border-2 border-[#3c3c3c] bg-[#6a6a6a]">
      <span className="size-[7px] rounded-full bg-[#a8a8a8]" />
    </span>
    <span className="flex-1 text-center whitespace-pre">{t}</span>
  </div>
);

const Top = () => (
  <>
    <div className="flex h-[29px] shrink-0 items-center bg-[#f3f3f3] text-[#8a8a8a]">
      <Ic n="q" c="size-[20px] ml-[2px]" />
      <span className="ml-[5px] pt-px text-[14.5px] tracking-[-0.1px]">*Projekt bez nazwy — QGIS</span>
      <div className="ml-auto flex items-center">
        <svg viewBox="0 0 12 12" className="mr-[46px] size-3"><path d="M0 5.500h12" stroke="#888" /></svg>
        <svg viewBox="0 0 12 12" className="mr-[47px] size-3" fill="none" stroke="#888"><rect x=".5" y="2.500" width="9" height="9" rx="1.500" /><path d="M3 .5h6.500a2 2 0 012 2V9" /></svg>
        <svg viewBox="0 0 12 12" className="mr-[26px] size-3"><path d="M0 0l12 12M12 0L0 12" stroke="#888" /></svg>
      </div>
    </div>
    <div className="flex h-[25px] shrink-0 items-center border-b border-[#d0d0d0] bg-[#efefef] pt-[2px] pl-[11px] text-[14px] text-[#a0a0a0]">
      {menus.map(([a, u, b], i) => (
        <span key={i} className={`${menuW[i]} shrink-0`}>
          {a}
          <u className="underline-offset-2">{u}</u>
          {b}
        </span>
      ))}
    </div>

    <div className={`${bar} h-[39px]`}>
      <Grip c="w-[14px] pl-[6px]" />
      <Slots list="new open save layoutNew layoutMgr style" />
      <Grip c="w-[18px] pl-[9px]" />
      <Slot n="hand" on />
      <Slots list="panSel zin zout zfull zsel zlay" />
      <Slot n="z11" off />
      <Slot n="zlast" />
      <Slot n="znext" off />
      <Slots list="mapNew map3d bmNew bms clock refresh" />
      <Grip c="w-[18px] pl-[9px]" />
      <Slot n="select" /><Arr />
      <Slot n="selForm" /><Arr />
      <Slot n="desel" /><Arr />
      <Slot n="selLoc" />
      <Grip />
      <Slots list="ident abacus" />
      <Slot n="gear" on />
      <Slots list="sigma table" /><Arr />
      <Slot n="ruler" /><Arr />
      <Slot n="bubble" />
      <Slot n="playGear" off /><Arr c="w-[12px]" off />
    </div>

    <div className={`${bar} h-[39px]`}>
      <Grip c="w-[14px] pl-[6px]" />
      <Slots list="dsm gpkg shpNew spatNew memNew meshNew virtNew" />
      <Grip c="w-[18px] pl-[9px]" />
      <Slot n="edits" off />
      <Slot n="pencil" />
      <Slots list="saveEdit line" off /><Arr off />
      <Slot n="addPts" off />
      <Slot n="vertex" off /><Arr off />
      <div className="-ml-px" />
      <Slots list="editRows trash cut copy paste undo redo" off />
      <Grip />
      <Slots list="tag diag" />
      <Sep c="w-2 h-[26px]" />
      <Slots list="tagPin tagRed" />
      <Sep c="w-[9px] h-[26px]" />
      <Slots list="tagPin tagEye tagMove tagRot tagEdit" off />
      <Grip />
      <Slot n="binoc" />
      <Grip c="w-[19px] pl-[9px]" />
      <Slot n="pyCon" />
      <Grip c="w-[18px] pl-[8px]" />
      <Slot n="help" />
      <Grip c="w-[18px] pl-[8px]" />
      <Slot n="tblRef" />
    </div>

    <div className={`${bar} h-[38px] text-[14px]`}>
      <Grip c="w-[14px] pl-[6px]" />
      <Slots list="scp1 scp2" />
      <div className="w-px" />
      <DarkTag t="RGB =" c="w-[68px]" />
      <div className="ml-[2px] flex h-6 w-20 items-center rounded-[3px] border border-[#ababab] bg-white">
        <span className="flex-1 pl-1">-</span>
        <Arr c="h-full w-[28px] bg-[#f6f6f6]" />
      </div>
      <Slots list="pct sig scp3" />
      <DarkTag t="OT" c="w-[50px]" />
      <Ic n="orange" c="size-6 ml-[5px]" />
      <div className="ml-[618px] flex h-[19px] w-[12px] items-center justify-center bg-[#4e4e4e] font-serif text-[14px] font-bold text-white">S</div>
      <div className="w-px" />
      <Spin v="200" />
      <div className="w-px" />
      <Slots list="bin kml" />
      <Grip c="w-[20px] pl-[9px]" />
      <Ic n="grid" c="size-6 ml-[2px]" />
      <Spin v="0" c="ml-[5px] w-[60px] h-6" />
      <Ic n="play" c="size-6 ml-[5px]" />
      <Spin v="1" c="ml-[5px] w-[60px] h-6" />
      <Ic n="play" c="size-6 ml-[5px]" />
      <Spin v="2" c="ml-[5px] w-[60px] h-6" />
      <Ic n="play" c="size-6 ml-[5px]" />
      <Ic n="gridUndo" c="size-6 ml-[9px]" />
    </div>
  </>
);

/* ---------- docks ---------- */

const DockTitle = ({ t, c }: { t: string; c: string }) => (
  <div className={`flex shrink-0 items-center ${c}`}>
    <span className="flex-1 text-[14.2px]">{t}</span>
    <svg viewBox="0 0 12 12" className="mb-[3px] size-[11.5px]" fill="none" stroke="#666">
      <rect x=".5" y=".5" width="11" height="11" rx="2" />
      <path d="M2.500 5.500h4v4h-4zM5 5V2.500h4.500V7H7" />
    </svg>
    <svg viewBox="0 0 12 12" className="mb-[3px] ml-[3px] size-[11.5px]" fill="none" stroke="#555">
      <rect x=".5" y=".5" width="11" height="11" rx="2" />
      <path d="M3 3l6 6M9 3L3 9" strokeWidth="2" />
    </svg>
  </div>
);

const Dots = ({ c }: { c: string }) => (
  <div className={`flex h-px gap-[2px] ${c}`}>
    {[0, 1, 2, 3, 4, 5].map((i) => (
      <span key={i} className="size-px bg-[#a0a0a0]" />
    ))}
  </div>
);

const Check = ({ on }: { on?: boolean }) => (
  <span className="flex size-[17px] shrink-0 items-center justify-center border border-[#b9b9b9] bg-white">
    {on && (
      <svg viewBox="0 0 12 12" className="size-[12px]" fill="none">
        <path d="M1.500 6l3 4.500L10.500.5" stroke="#000" strokeWidth="2.200" />
      </svg>
    )}
  </span>
);

const Sym = ({ k, v }: { k: string; v: string }) =>
  k === "dot" ? (
    <svg viewBox="0 0 19 19" className="size-[19px]"><circle cx="10" cy="9" r="4.800" fill={v} stroke="#333" /></svg>
  ) : k === "line" ? (
    <svg viewBox="0 0 19 19" className="size-[19px]"><path d="M0 9h19" stroke={v} strokeWidth="2" /></svg>
  ) : k === "poly" ? (
    <Ic n="poly" c="size-5" />
  ) : (
    <svg viewBox="0 0 19 19" className="size-[19px]"><rect x=".5" y=".5" width="18" height="18" fill={v} stroke="#3a3a3a" /></svg>
  );

const layers: [string, string, string, boolean, boolean?][] = [
  ["Przycięte", "dot", "#7fb26b", true, true],
  ["popp", "dot", "#9b80bd", false],
  ["bristol", "sq", "#beb297", true],
  ["regions", "sq", "#e15989", false],
  ["airports", "dot", "#b84848", false],
  ["Przycięte", "line", "#f0688c", false, true],
  ["railroads", "line", "#beb297", false],
  ["matanuska", "sq", "#729b6f", false],
  ["trees", "sq", "#e5b636", false],
  ["trees", "poly", "", true],
];
const classes: [string, string][] = [["Deciduous", "#9dd61f"], ["Evergreen", "#e8274b"], ["Mixed Trees", "#5b15f0"], ["", "#38c8b0"]];

const Tri = ({ up }: { up?: boolean }) => (
  <svg viewBox="0 0 10 6" className="h-[5px] w-[9px]"><path d={up ? "M0 6h10L5 0z" : "M0 0h10L5 6z"} fill="#444" /></svg>
);

const Scroll = ({ a, b }: { a: string; b: string }) => (
  <div className="flex w-[17px] shrink-0 flex-col border-l border-[#b8b8b8] bg-[#e3e3e3]">
    <div className="flex h-[17px] items-center justify-center border-b border-[#b8b8b8] bg-[#f8f8f8]"><Tri up /></div>
    <div className={a} />
    <div className={`border-y border-[#c0c0c0] bg-white ${b}`} />
    <div className="mt-auto flex h-[17px] items-center justify-center border-t border-[#b8b8b8] bg-[#f8f8f8]"><Tri /></div>
  </div>
);

const Src = ({ n, t }: { n: string; t: string }) => (
  <div className="flex h-[22px] shrink-0 items-center">
    <div className="flex w-[20px] justify-center pr-[3px]">{t === "XYZ Tiles" && <Tri />}</div>
    <Ic n={n} c="size-[19px] ml-px" />
    <span className="ml-[6px] pt-[2px]">{t}</span>
  </div>
);

const Small = ({ list, w = "w-[25.2px]" }: { list: string[]; w?: string }) => (
  <>
    {list.map((n, i) => (
      <div key={i} className={`flex shrink-0 justify-center ${w}`}><Ic n={n} c="size-[17px]" /></div>
    ))}
  </>
);

const Left = () => (
  <div className="flex w-[410px] shrink-0 flex-col text-[14px]">
    <DockTitle t="Warstwy" c="h-6 pl-1 pr-[1px]" />
    <div className="flex h-[22px] items-center pl-[3px]">
      <Small list={["brush", "group", "eye", "filterA"]} />
      <Small list={["eps"]} w="w-[24px]" />
      <Arr c="w-[14px]" />
      <div className="w-[3px]" />
      <Small list={["expand", "collapse", "remove"]} w="w-[24.7px]" />
    </div>
    <div className="mt-[5px] flex h-[468px] flex-col border border-[#b4b4b4] bg-white">
      {layers.map(([t, k, v, on, mem], i) => (
        <div key={i} className={`flex h-[22px] shrink-0 items-center ${i === 0 ? "bg-[#efefef]" : ""}`}>
          <div className="flex w-[28px] justify-center pr-1">{i === 9 && <Tri />}</div>
          <Check on={on} />
          <div className="ml-[6px] flex w-[20px] shrink-0"><Sym k={k} v={v} /></div>
          <span className={`ml-[5px] flex-1 pt-[2px] font-bold ${on ? "" : "tracking-[0.15px] text-[#808080] italic"} ${i === 0 ? "underline underline-offset-2" : ""}`}>{t}</span>
          {mem && (
            <span className="mr-[7px] flex size-[19px] items-center justify-center rounded-[3px] border border-[#d5d5d5] bg-[#f0f0f0]">
              <Ic n="chip" c="size-[15px]" />
            </span>
          )}
        </div>
      ))}
      {classes.map(([t, v]) => (
        <div key={v} className="flex h-[22px] shrink-0 items-center pl-[53px]">
          <Check on />
          <div className="ml-[6px] w-[19px] shrink-0"><Sym k="sq" v={v} /></div>
          <span className="ml-[6px] pt-[2px]">{t}</span>
        </div>
      ))}
    </div>
    <div className="mt-px flex h-[29px] items-start border-t border-[#b4b4b4] text-[12.5px] tracking-[-0.2px]">
      <div className="flex h-[27px] w-[84px] items-center justify-center rounded-bl-[3px] border-x border-b border-[#b4b4b4] bg-[#dcdcdc] pt-[2px]">
        <span>SCP <u>D</u>ock</span>
      </div>
      <div className="flex h-[28px] w-[80px] items-center justify-center rounded-b-[3px] border-r border-b border-[#b4b4b4] bg-[#f8f8f8] pt-[2px]">Warstwy</div>
    </div>
    <Dots c="mt-[3px] ml-[198px]" />
    <DockTitle t="Przeglądarka" c="mt-[3px] h-6 pl-1 pr-[2px]" />
    <div className="flex h-[22px] items-center pl-[3px]">
      <Small list={["addItem", "refresh", "filter", "collapse", "info"]} w="w-[25px]" />
    </div>
    <div className="mt-[5px] flex h-[211px] border border-[#b4b4b4] bg-white">
      <div className="flex flex-1 flex-col overflow-hidden">
        <Src n="gpkgs" t="GeoPackage" />
        <Src n="feather" t="SpatiaLite" />
        <Src n="pg" t="PostgreSQL" />
        <Src n="hana" t="SAP HANA" />
        <Src n="mssql" t="MS SQL Server" />
        <Src n="oracle" t="Oracle" />
        <Src n="globe" t="WMS/WMTS" />
        <Src n="vtile" t="Vector Tiles" />
        <Src n="grid9" t="XYZ Tiles" />
        <div className="flex h-[22px] shrink-0 items-center pl-[38px]">
          <Ic n="grid9" c="size-[18px]" />
          <span className="ml-[7px] pt-[2px]">Mapzen Global Terrain</span>
        </div>
      </div>
      <Scroll a="h-[36px]" b="h-[84px]" />
    </div>
  </div>
);

/* ---------- map canvas ---------- */

const points = [[735.7, 536], [735, 547], [774, 566], [829, 592], [757, 593], [730.7, 599], [715.7, 607], [944, 627], [1045.7, 643], [990, 671]];

const Canvas = () => (
  <div className="relative mt-px ml-[7px] flex w-[1234px] shrink-0 flex-col border border-[#b4b4b4] bg-white">
    <div className="flex h-[35px] items-center justify-end border-b border-[#8f9f8a] bg-[#dff0d8] pr-[11px]">
      <span className="mr-[22px] text-[13px] italic">1 more</span>
      <svg viewBox="0 0 20 20" className="size-5"><circle cx="10" cy="10" r="10" fill="#2e3436" /><path d="M5.500 5.500l9 9M14.500 5.500l-9 9" stroke="#fff" strokeWidth="3" /></svg>
      <Arr c="w-[12px]" />
    </div>
    <svg viewBox="418 207 1232 780" className="min-h-0 flex-1">
      <path
        d="M745 428L1026 427 1131 432 1121.400 707.300 619 686 627 681 634 671 647.500 663 658 653 663.500 643 670 636 678 630 685.700 626.700 694.600 616 703.500 611 713 600 729 595.700 743 596.700 752 594.700 757 590 768 589 773 586 769 580.300 756 580.700 742 585.700 732 581.700 728 576 726.400 569 730.400 550.700 729 533 738.600 521.700 745.700 520z"
        fill="#beb297"
        stroke="#232323"
        strokeWidth="1.200"
      />
      {points.map(([x, y]) => (
        <circle key={`${x}-${y}`} cx={x} cy={y} r="4.700" fill="#7fb26b" stroke="#232323" strokeWidth="1.100" />
      ))}
    </svg>
  </div>
);

/* ---------- processing dock ---------- */

const algs = ["Ostatnio używane", "Database", "GPS", "Interpolacje", "Kafle wektorowe", "Kartografia", "Plik - narzędzia", "Raster - analiza", "Raster - analiza terenu"];

const Right = () => (
  <div className="ml-[7px] flex w-[262px] shrink-0 flex-col text-[14px]">
    <DockTitle t="Algorytmy Processingu" c="h-6 pl-[3px] pr-[1px]" />
    <div className="flex h-[22px] items-center pl-[5px]">
      <Small list={["gears", "pyA", "clock"]} w="w-[24.5px]" />
      <div className="flex h-[23px] w-6 items-center justify-center rounded-[3px] border border-[#adadad] bg-[#dcdcdc]"><Ic n="docL" c="size-[17px]" /></div>
      <Sep c="w-[10px] h-3" />
      <Small list={["note"]} w="w-[22px]" />
      <Sep c="w-[11px] h-3" />
      <Small list={["wrench"]} w="w-[22px]" />
    </div>
    <div className="mt-[5px] flex h-[26px] shrink-0 items-center rounded-[3px] border border-[#ababab] bg-white pl-[9px]">
      <Ic n="lens" c="size-4" />
      <span className="ml-[8px] text-[13px] text-[#7a7a7a]">Szukaj...</span>
    </div>
    <div className="flex h-[193px] shrink-0 border border-[#b4b4b4] bg-white">
      <div className="flex flex-1 flex-col overflow-hidden">
        {algs.map((t, i) => (
          <div key={t} className="flex h-[22px] shrink-0 items-center">
            <svg viewBox="0 0 6 10" className="ml-[10px] h-[10px] w-[5px]"><path d="M0 0v10l6-5z" fill="#555" /></svg>
            <Ic n={i ? "q" : "clock"} c="size-[19px] ml-[14px]" />
            <span className="ml-[6px] pt-[2px] tracking-[0.05px]">{t}</span>
          </div>
        ))}
      </div>
      <Scroll a="h-0" b="h-[51px]" />
    </div>
    <Dots c="mt-[4px] ml-[124px] shrink-0" />
    <DockTitle t="Podgląd wyników" c="mt-[6px] h-[16px] pl-[3px] pr-[1px]" />
    <div className="h-[258px] shrink-0 border border-[#b4b4b4] bg-white" />
    <Dots c="mt-[3px] ml-[124px] shrink-0" />
    <div className="mt-[2px] flex-1 border border-[#b4b4b4] bg-white" />
  </div>
);

/* ---------- attribute table window ---------- */

const rows = [
  ["1493,000", "Settlement", "AL105", "KOGGIUNG"],
  ["1501,000", "Building", "AL015", "CANNERIES"],
  ["1503,000", "Building", "AL015", "CANNERIES"],
  ["1505,000", "Building", "AL015", "CANNERIES"],
  ["1508,000", "Settlement", "AL105", "SAVONOSKI"],
  ["1509,000", "Settlement", "AL105", "SOUTH NAKNEK"],
  ["1510,000", "Building", "AL015", "CANNERIES"],
];

const DS = ({ list, off }: { list: string; off?: boolean }) => (
  <>
    {list.split(" ").map((n) => (
      <div key={n} className="flex w-[25px] shrink-0 justify-center"><Ic n={n} c="size-4" off={off} /></div>
    ))}
  </>
);

const Dialog = () => (
  <div className="absolute top-[138px] left-[404px] z-20 flex h-[383px] w-[622px] flex-col overflow-hidden rounded-lg border border-[#9a9a9a] bg-[#efefef] text-[14px] shadow-[0_32px_64px_rgba(0,0,0,0.36),0_2px_20px_rgba(0,0,0,0.2)]">
    <div className="flex h-[35px] shrink-0 items-center bg-[#f0f2f9]">
      <Ic n="q" c="size-[20px] ml-[8px]" />
      <span className="ml-[5px] text-[14.2px]">Przycięte — Features Total: 11, Filtered: 11, Selected: 0</span>
      <svg viewBox="0 0 12 12" className="ml-auto size-3"><path d="M0 5.500h12" stroke="#111" /></svg>
      <svg viewBox="0 0 12 12" className="ml-[46px] size-3" fill="none"><rect x=".5" y=".5" width="11" height="11" rx="1" stroke="#111" strokeWidth="1.200" /></svg>
      <svg viewBox="0 0 12 12" className="mr-[23px] ml-[47px] size-3"><path d="M0 0l12 12M12 0L0 12" stroke="#111" strokeWidth="1.200" /></svg>
    </div>
    <div className="flex h-[32px] shrink-0 items-center pl-[2px]">
      <DS list="pencil" />
      <DS list="editRows saveEdit" off />
      <Sep c="w-[8px] h-3" />
      <DS list="rowAdd trash cut copy paste" off />
      <Sep c="w-[8px] h-3" />
      <DS list="selExp rows invert deselS filter top panSel zsel" />
      <Sep c="w-[8px] h-3" />
      <DS list="colAdd colDel" off />
      <DS list="calcPen abacus" />
      <Sep c="w-[8px] h-3" />
      <DS list="condFmt" />
      <Sep c="w-[8px] h-3" />
      <DS list="action dock" />
    </div>
    <div className="flex h-[281px] shrink-0 border-y border-[#b4b4b4] bg-white">
      <div className="flex flex-1 flex-col overflow-hidden">
        <div className="flex h-6 shrink-0 bg-[#efefef]">
          <div className="w-[22px] border-r border-b border-[#b4b4b4] bg-linear-to-b from-[#fafafa] to-[#efefef]" />
          {["cat", "F_CODEDESC", "F_CODE", "TYPE"].map((h) => (
            <div key={h} className="flex w-[125px] items-center justify-center border-r border-b border-[#b4b4b4] bg-linear-to-b from-[#fafafa] to-[#efefef] pt-[2px]">{h}</div>
          ))}
        </div>
        {rows.map((r, i) => (
          <div key={r[0]} className="flex h-[37px] shrink-0">
            <div className="flex w-[22px] items-center border-r border-b border-[#b4b4b4] bg-linear-to-r from-[#fafafa] to-[#efefef] pt-[5px] pl-[2px]">{i + 1}</div>
            {r.map((c, j) => (
              <div
                key={j}
                className={`flex w-[125px] items-center border-r border-b border-[#c0c0c0] pt-[2px] ${j === 0 ? "justify-end pr-[3px]" : "pl-[3px]"} ${j === 3 ? "tracking-[0.3px]" : ""} ${i % 2 ? "bg-[#e9e7e3]" : ""} ${
                  i === 0 && j === 0 ? "bg-linear-to-b from-white to-[#e5f3fe] outline-2 -outline-offset-2 outline-[#0ced80]" : ""
                }`}
              >
                {c}
              </div>
            ))}
          </div>
        ))}
      </div>
      <Scroll a="h-0" b="h-[134px]" />
    </div>
    <div className="flex flex-1 items-center pr-[2px] pl-[2px]">
      <div className="flex h-[27px] w-[175px] items-center rounded-[3px] border border-[#ababab] bg-linear-to-b from-[#fdfdfd] to-[#efefef] pl-[4px] text-[12.5px]">
        <Ic n="table" c="size-[17px]" />
        <span className="ml-[4px] pt-[2px] tracking-[-0.15px]">pokaż wszystkie obiekty</span>
        <Arr c="ml-[2px] mt-[11px] w-[10px]" />
      </div>
      <Ic n="form" c="ml-auto size-[17px]" />
      <div className="ml-[6px] flex h-[27px] w-[27px] items-center justify-center rounded-[3px] border border-[#adadad] bg-[#dcdcdc]"><Ic n="table" c="size-[17px]" /></div>
    </div>
  </div>
);

/* ---------- status bar ---------- */

const Status = () => (
  <div className="flex h-8 shrink-0 items-center pl-1 text-[12.5px] tracking-[-0.15px] whitespace-nowrap">
    <div className="flex h-[26px] w-[232px] items-center rounded-[3px] border border-[#ababab] bg-white pl-[9px] text-[13px] text-[#7a7a7a]">
      <Ic n="lens" c="size-[15px]" />
      <span className="ml-[9px]">Szukana fraza (Ctrl+K)</span>
    </div>
    <span className="ml-2 w-[711px] pt-[3px] text-[12.7px] tracking-[0.03px]">Włącza/wyłącza tryb edycji aktywnej warstwy</span>
    <span className="w-[78px] pt-[3px]">Współrzędne</span>
    <div className="flex h-[25px] w-[115px] items-center rounded-[3px] border border-[#ababab] bg-white pl-[6px]">-597622 3213121</div>
    <Ic n="sat" c="ml-[4px] size-5" />
    <span className="ml-[13px] w-[34px] pt-[2px]">Skala</span>
    <div className="flex h-6 w-[93px] items-center rounded-[3px] border border-[#ababab] bg-white pl-[3px]">
      <span className="flex-1">1:512000</span>
      <Arr c="h-full w-[28px] bg-[#f6f6f6]" />
    </div>
    <Ic n="lock" c="ml-[11px] size-[18px]" />
    <span className="ml-[8px] w-[79px] pt-[3px]">Powiększenie</span>
    <Spin v="100%" c="w-[93px] h-6" />
    <span className="ml-[9px] w-[67px] pt-[3px]">Kąt obrotu</span>
    <Spin v="0,0 º" c="w-[89px] h-6" />
    <div className="ml-[6px]"><Check on /></div>
    <span className="ml-[6px] w-[67px] pt-[2px]">Renderuj</span>
    <Ic n="wire" c="size-[19px]" />
    <span className="ml-[3px] w-[88px] pt-[3px]">EPSG:2964</span>
    <Ic n="msg" c="size-[20px]" />
  </div>
);

/* ---------- taskbar ---------- */

const App55 = ({ children, dot, on }: { children: React.ReactNode; dot?: boolean; on?: boolean }) => (
  <div className="relative flex h-[60px] w-[55px] shrink-0 items-center justify-center">
    {on && <div className="absolute inset-y-[4px] right-[4px] left-[6px] rounded-md border border-[#383838] bg-[#262626]" />}
    {on && <div className="absolute inset-y-[4px] right-[7px] left-[4px] rounded-md border border-[#383838] bg-[#2d2d2d]" />}
    <div className="relative flex size-[30px] items-center justify-center">{children}</div>
    {dot && <span className="absolute bottom-[6px] h-[4px] w-[8px] rounded-full bg-[#9a9a9a]" />}
    {on && <span className="absolute bottom-[6px] h-[4px] w-[20px] rounded-full bg-[#ff6b63]" />}
  </div>
);

const S = ({ children }: { children: React.ReactNode }) => (
  <svg viewBox="0 0 30 30" className="size-[30px]" fill="none">{children}</svg>
);

const Taskbar = () => (
  <div className="flex h-[60px] shrink-0 border-t border-[#3d3d3d] bg-[#202020] text-white">
    <div className="flex w-[370px] shrink-0 items-center pb-[2px] pl-[24px]">
      <svg viewBox="0 0 32 32" className="size-8" fill="none">
        <path d="M7 20a6 6 0 01.5-12A8.500 8.500 0 0124 9a6 6 0 011 11z" fill="#b4bfd4" />
        <path d="M1 24.500h19M23 24.500h8M1 30h30" stroke="#8ba0bd" strokeWidth="2.300" />
      </svg>
      <div className="ml-[8px] text-[14px] leading-[20px]">
        <div>3°C</div>
        <div className="text-[#c5c5c5]">Mgła</div>
      </div>
    </div>
    <App55>
      <svg viewBox="0 0 29 29" className="size-[29px]">
        <defs><linearGradient id="win" x1="0" y1="0" x2="1" y2="1"><stop stopColor="#8fe3ff" /><stop offset=".5" stopColor="#3cc2fb" /><stop offset="1" stopColor="#0a8cf5" /></linearGradient></defs>
        <path d="M0 0h14v14H0zM15 0h14v14H15zM0 15h14v14H0zM15 15h14v14H15z" fill="url(#win)" />
      </svg>
    </App55>
    <div className="mt-[10px] ml-[5px] flex h-[38px] w-[273px] shrink-0 items-center rounded-full bg-[#f3f3f3] pl-[14px]">
      <svg viewBox="0 0 20 20" className="size-[19px]" fill="none" stroke="#222" strokeWidth="2"><circle cx="8.500" cy="8.500" r="7" /><path d="M13.500 13.500l5.500 5.500" /></svg>
      <span className="ml-[12px] text-[16px] tracking-[-0.2px] text-[#5f5f5f]">Wyszukaj</span>
    </div>
    <div className="w-[3px] shrink-0" />
    <App55><S><rect x="0" y="9" width="22" height="20" rx="1.500" fill="#6a6a6a" /><rect x="7.500" y="1" width="22.500" height="20" rx="1.500" fill="#f4f4f4" /><path d="M7.500 9H22v12H7.500z" fill="#b5b5b5" /></S></App55>
    <App55 dot>
      <S>
        <circle cx="16" cy="7" r="5" fill="#7b83eb" /><path d="M18 11h12v9c0 5-6 7-10 5z" fill="#5059c9" /><path d="M8 11h15v10a7.500 7.500 0 01-15 0z" fill="#7b83eb" />
        <rect x="0" y="7" width="15" height="15" rx="1.500" fill="#4b53bc" />
        <text x="7.500" y="19" fontSize="12" fontWeight="700" textAnchor="middle" fill="#fff" fontFamily="Open Sans, sans-serif">T</text>
      </S>
      <span className="absolute -top-[7px] left-[16px] flex size-[20px] items-center justify-center rounded-full bg-[#13a10e]">
        <svg viewBox="0 0 10 10" className="size-[10px]"><path d="M1 5l3 3 5-6" stroke="#fff" strokeWidth="1.800" fill="none" /></svg>
      </span>
    </App55>
    <App55 dot>
      <S>
        <defs>
          <linearGradient id="edg" x1="0" y1="0" x2="1" y2=".5"><stop stopColor="#2aa9ea" /><stop offset=".6" stopColor="#35c7c0" /><stop offset="1" stopColor="#6fe04e" /></linearGradient>
          <clipPath id="edc"><circle cx="15" cy="15" r="15" /></clipPath>
        </defs>
        <g clipPath="url(#edc)">
          <path d="M0 0h30v30H0z" fill="#0c78d0" />
          <path d="M12 13c-3 6 2 13.500 10 14l5-2.500V30H14C5 27 7 16 12 13z" fill="#154a9c" />
          <path d="M0 15C1 5 8 0 15 0c9 0 15 6.500 15 12.500 0 4.500-3.500 8-8 8-3.500 0-5-1.500-4-3 2-4-1.500-7.500-7-7.500C6 10 2 12 0 15z" fill="url(#edg)" />
          <path d="M17.500 14c1 1.500 1 2.500.3 3.700-1.300 2 .7 3.500 4.200 3.300 3 0 6-1.500 8-4v6.500c-3 3-8 2.500-11 .5-3.500-2.300-5.500-7-1.500-10z" fill="#202020" />
        </g>
      </S>
    </App55>
    <App55 dot>
      <S><path d="M0 4c0-1.500 1-2 2-2h8l3 4v6H0z" fill="#e0a100" /><rect x="0" y="6" width="30" height="22" rx="1.500" fill="#fdcb3c" /><path d="M5 28v-5c0-1.500 1-2.500 2.500-2.500h15c1.500 0 2.500 1 2.500 2.500v5z" fill="#0f78d4" /><path d="M9 24.500h12" stroke="#0a4f9a" strokeWidth="1.500" /></S>
    </App55>
    <App55><S><path d="M0 12L15 1l15 11v17H0z" fill="#0f5fb0" /><path d="M3 10h24v12H3z" fill="#f2f2f2" /><path d="M0 11l15 10v8H0z" fill="#35b8f1" /><path d="M30 11L0 29h30z" fill="#1d9ae0" /></S></App55>
    <App55>
      <S>
        <defs><linearGradient id="arm" x1="0" y1="1" x2="1" y2="0"><stop stopColor="#6a1bff" /><stop offset=".5" stopColor="#2458ff" /><stop offset="1" stopColor="#1da0ff" /></linearGradient></defs>
        <path d="M0 0h30v30H0z" fill="url(#arm)" /><path d="M4.500 22L11 9M9.500 22L16 9" stroke="#fff" strokeWidth="2" /><path d="M15 22L22.500 9h3v13h-3v-7l-4 7z" fill="#fff" />
      </S>
    </App55>
    <App55><div className="flex size-[30px] items-center justify-center bg-[#76b900]"><SiNvidia className="size-[21px]" color="#fff" /></div></App55>
    <App55>
      <S>
        <defs><linearGradient id="m36" x1="0" y1="0" x2="1" y2="1"><stop stopColor="#5fd0f5" /><stop offset=".5" stopColor="#4a6fe0" /><stop offset="1" stopColor="#7c4fd0" /></linearGradient></defs>
        <path d="M14 2L5 7c-2 1-3 2.500-3 5v6c0 3 3 5 5 4l4-2v-9c0-3 1-4 3-5l5-2z" fill="url(#m36)" />
        <path d="M14 2c4-1 8 2 11 4s3 3 3 6v7c0 3-1 4.500-3 5.500l-7 4c-3 1.500-6 0-9-2l-2-2c4 1 6-1 8-2l4-2c1-.5 1-1.500 1-3V9z" fill="#9a77ea" />
        <path d="M28 17c0 4-1 6-3 7.500l-7 4c-3 1.500-7 0-11-5 4 1 7 .5 10-1z" fill="#c9b4f5" />
      </S>
    </App55>
    <App55 dot>
      <S>
        <circle cx="15" cy="15" r="15" fill="#fbc116" />
        <path d="M15 15L2 7.500A15 15 0 0128 7.500z" fill="#e33b2e" /><path d="M2 7.500A15 15 0 0015 30l6.500-11.500H9z" fill="#229a4c" /><path d="M15 7.500h13a15 15 0 01-13 22.500l6.500-11.500z" fill="#fbc116" />
        <circle cx="15" cy="15" r="7.300" fill="#fff" /><circle cx="15" cy="15" r="5.800" fill="#2f7de9" />
      </S>
    </App55>
    <App55 dot>
      <div className="flex size-[30px] items-center justify-center rounded-full bg-[#5865f2]"><FaDiscord className="size-[19px]" color="#fff" /></div>
      <span className="absolute -top-[7px] left-[17px] flex size-[17px] items-center justify-center rounded-full bg-[#f0494e] text-[11px]">9+</span>
    </App55>
    <App55><FaSpotify className="size-[30px]" color="#1ed760" /></App55>
    <App55><div className="flex size-[29px] items-center justify-center rounded-full bg-linear-to-b from-[#12203f] to-[#1786bd]"><FaSteamSymbol className="size-[24px]" color="#fff" /></div></App55>
    <App55>
      <S>
        <path d="M2 0h26v24l-13 6-13-6z" fill="#0c0c0c" />
        <text x="15" y="15" fontSize="13" fontWeight="800" textAnchor="middle" fill="#fff" textLength="19" lengthAdjust="spacingAndGlyphs" fontFamily="Open Sans, sans-serif">EPIC</text>
        <text x="15" y="22" fontSize="5" fontWeight="700" textAnchor="middle" fill="#fff" fontFamily="Open Sans, sans-serif">GAMES</text>
        <path d="M11 25.500h8l-4 2z" fill="#fff" />
      </S>
    </App55>
    <App55>
      <S>
        <path d="M15 1l12.500 7v14L15 29 2.500 22V8z" fill="#111" stroke="#ddd" strokeWidth="1.300" />
        <g fill="none" strokeWidth="2"><path d="M15 5a10 10 0 019 6" stroke="#e9c33b" /><path d="M24 11a10 10 0 01-2 11" stroke="#e8513f" /><path d="M22 22a10 10 0 01-13 1" stroke="#a04fd6" /><path d="M9 23a10 10 0 01-3-11" stroke="#3f9bea" /><path d="M6 12a10 10 0 019-7" stroke="#5ccf5a" /></g>
        <path d="M12 11.500a5 5 0 106 0M15 9v6" stroke="#fff" strokeWidth="2" fill="none" />
      </S>
    </App55>
    <App55 on><Ic n="q" c="size-[29px]" /></App55>
    <div className="flex flex-1 items-center justify-end pb-px">
      <svg viewBox="0 0 12 8" className="mr-[26px] h-[8px] w-[13px]" fill="none"><path d="M1 7l5-5 5 5" stroke="#fff" strokeWidth="1.500" /></svg>
      <svg viewBox="0 0 14 20" className="mr-[23px] h-[20px] w-[14px]" fill="none" stroke="#e58c7c" strokeWidth="1.400"><rect x="4" y="1" width="6" height="11" rx="3" /><path d="M1 9c0 8 12 8 12 0M7 15v4.500" /></svg>
      <svg viewBox="0 0 20 16" className="mr-[9px] h-[16px] w-[20px]" fill="none" stroke="#fff" strokeWidth="1.500"><path d="M1 6c5-5.500 13-5.500 18 0M3.800 9c4-4 8.500-4 12.500 0M6.500 11.800c2-2 5-2 7 0" /><circle cx="10" cy="14" r="1.200" fill="#fff" /></svg>
      <svg viewBox="0 0 20 16" className="mr-[11px] h-[16px] w-[20px]" fill="none" stroke="#fff" strokeWidth="1.300"><path d="M1 5.500h3l4-4v13l-4-4H1zM11 5.500c1.300 1.500 1.300 3.500 0 5M13.500 3.500c2.500 3 2.500 6 0 9" /><path d="M16 1.500c3.500 4 3.500 9 0 13" stroke="#888" /></svg>
      <svg viewBox="0 0 22 16" className="mr-[16px] h-[17px] w-[22px]"><rect x="4" y="3" width="15" height="12" rx="2" fill="#fff" /><path d="M20 7h1.500v4H20z" fill="#fff" /><path d="M1 4h6v3c0 3-6 3-6 0zM2.500 1v3M5.500 1v3" stroke="#fff" strokeWidth="1.300" fill="#202020" /></svg>
      <div className="w-[75px] text-right text-[14.3px] leading-[20px] tracking-[-0.15px]">
        <div>21:01</div>
        <div>01.12.2024</div>
      </div>
      <svg viewBox="0 0 18 20" className="mr-[26px] ml-[10px] h-[20px] w-[18px]" fill="#f08d80"><path d="M9 0c-4 0-6.500 3-6.500 7v5L.5 16h17l-2-4V7c0-4-2.500-7-6.500-7zM6.500 17.500h5c-.5 3-4.500 3-5 0z" /></svg>
    </div>
  </div>
);

export default function App() {
  return (
    <div className="relative flex h-[1080px] w-[1920px] flex-col overflow-hidden bg-[#efefef] font-['Open_Sans',sans-serif] leading-none whitespace-nowrap text-black">
      <Top />
      <div className="flex h-[818px] shrink-0">
        <Left />
        <Canvas />
        <Right />
      </div>
      <Status />
      <Taskbar />
      <Dialog />
    </div>
  );
}
